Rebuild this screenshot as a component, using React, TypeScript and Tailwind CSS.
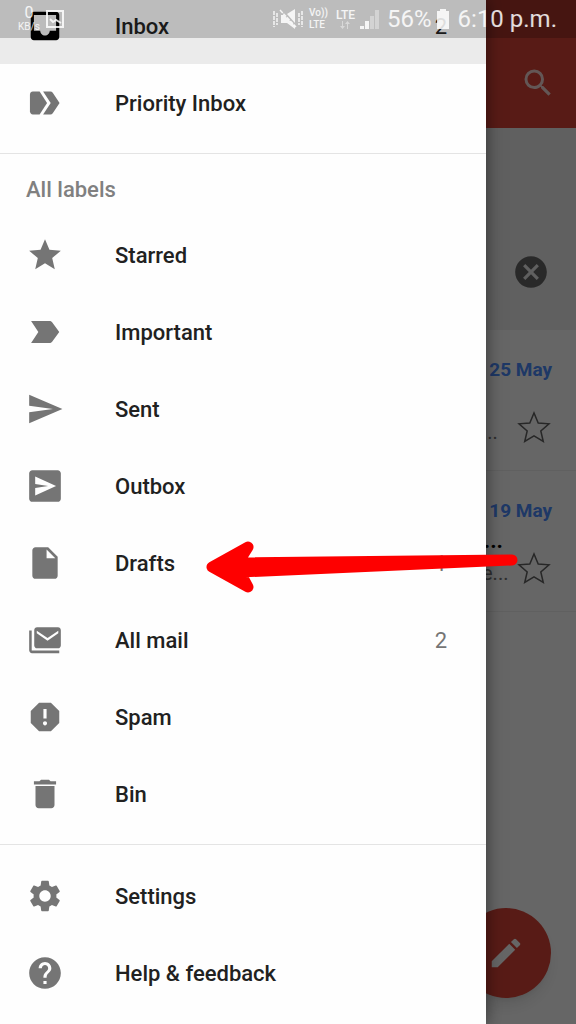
import type { ReactNode } from "react";
import {
  MdCancel,
  MdCreate,
  MdDelete,
  MdHelp,
  MdReport,
  MdSearch,
  MdSend,
  MdSettings,
  MdStar,
} from "react-icons/md";

function Glyph({ children }: { children: ReactNode }) {
  return (
    <svg viewBox="0 0 24 24" className="size-full" fill="currentColor" aria-hidden>
      {children}
    </svg>
  );
}

const InboxIcon = () => (
  <Glyph>
    <path d="M19 3H5c-1.1 0-2 .9-2 2v14c0 1.1.9 2 2 2h14c1.1 0 2-.9 2-2V5c0-1.1-.9-2-2-2zm0 12h-4c0 1.66-1.34 3-3 3s-3-1.34-3-3H5V5h14v10z" />
  </Glyph>
);

const PriorityIcon = () => (
  <Glyph>
    <path d="M4.3 4.8H8.6L13.3 12l-4.7 7.2H4.3c-1 0-1.8-.8-1.8-1.8V6.6c0-1 .8-1.8 1.8-1.8z" />
    <path d="M10.8 4.8h4.6c.6 0 1.1.3 1.5.8L21.2 12l-4.3 6.4c-.4.5-.9.8-1.5.8h-4.6L15.6 12z" />
  </Glyph>
);

const ImportantIcon = () => (
  <Glyph>
    <path d="M3.2 19h11.6c.7 0 1.3-.3 1.7-.8L21 12l-4.5-6.2c-.4-.5-1-.8-1.7-.8H3.2L7.8 12z" />
  </Glyph>
);

const OutboxIcon = () => (
  <Glyph>
    <path
      fillRule="evenodd"
      d="M4 2h16c1.1 0 2 .9 2 2v16c0 1.1-.9 2-2 2H4c-1.1 0-2-.9-2-2V4c0-1.1.9-2 2-2zM5.8 6v4.7L14 12l-8.2 1.3V18L19 12z"
    />
  </Glyph>
);

const DraftsIcon = () => (
  <Glyph>
    <path d="M6 2c-1.1 0-2 .9-2 2v16c0 1.1.9 2 2 2h12c1.1 0 2-.9 2-2V8l-6-6H6zm7 7V3.5L18.5 9H13z" />
  </Glyph>
);

const AllMailIcon = () => (
  <Glyph>
    <path d="M3.6 6H2v12.5c0 1 .8 1.8 1.8 1.8H21v-1.6H3.6z" />
    <path
      fillRule="evenodd"
      d="M7 4h13.2c1 0 1.8.8 1.8 1.8v9.6c0 1-.8 1.8-1.8 1.8H7c-1 0-1.8-.8-1.8-1.8V5.8C5.2 4.8 6 4 7 4zm-.2 3.8 6.8 4.6 6.8-4.6V6.2l-6.8 4.6-6.8-4.6z"
    />
  </Glyph>
);

const StarOutline = () => (
  <svg viewBox="0 0 24 24" className="size-full" fill="none" stroke="currentColor" aria-hidden>
    <path d="M12 17.27 18.18 21l-1.64-7.03L22 9.24l-7.19-.61L12 2 9.19 8.63 2 9.24l5.46 4.73L5.82 21z" />
  </svg>
);

type Item = { label: string; icon: ReactNode; count?: number; arrow?: boolean };

const INBOXES: Item[] = [{ label: "Priority Inbox", icon: <PriorityIcon /> }];

const LABELS: Item[] = [
  { label: "Starred", icon: <MdStar className="size-full" /> },
  { label: "Important", icon: <ImportantIcon /> },
  { label: "Sent", icon: <MdSend className="size-full" /> },
  { label: "Outbox", icon: <OutboxIcon /> },
  { label: "Drafts", icon: <DraftsIcon />, count: 1, arrow: true },
  { label: "All mail", icon: <AllMailIcon />, count: 2 },
  { label: "Spam", icon: <MdReport className="size-full" /> },
  { label: "Bin", icon: <MdDelete className="size-full" /> },
];

const FOOTER: Item[] = [
  { label: "Settings", icon: <MdSettings className="size-full" /> },
  { label: "Help & feedback", icon: <MdHelp className="size-full" /> },
];

function Arrow() {
  return (
    <svg
      viewBox="0 0 325 60"
      className="pointer-events-none absolute top-3 left-[200px] z-10 h-[60px] w-[325px]"
      aria-hidden
    >
      <path
        d="M12 31 48 11 38 27 312 24 40 36 48 51z"
        fill="#fe0000"
        stroke="#fe0000"
        strokeWidth="11"
        strokeLinejoin="round"
      />
    </svg>
  );
}

function Row({ item }: { item: Item }) {
  return (
    <li className="relative">
      <a href="#" className="flex h-[77px] items-center pr-[39px] pl-[26px]">
        <span className="mr-[51px] size-[38px] text-[#757575]">{item.icon}</span>
        <span className="flex-1 pt-0.5 font-medium text-[#212121]">{item.label}</span>
        {item.count && <span className="pt-0.5 text-[#757575]">{item.count}</span>}
      </a>
      {item.arrow && <Arrow />}
    </li>
  );
}

function Drawer() {
  return (
    <nav
      aria-label="Labels"
      className="absolute inset-y-0 right-[90px] left-0 bg-[#fefefe] text-[22px] leading-7 shadow-[0_0_16px_rgba(0,0,0,0.5)]"
    >
      {/* list is scrolled a little, so the first row runs under the status bar */}
      <div className="-mt-[13px]">
        <a
          href="#"
          className="flex h-[77px] items-center bg-[#ebebeb] pr-[39px] pl-[26px] text-[#212121]"
        >
          <span className="mr-[51px] size-[38px] text-black">
            <InboxIcon />
          </span>
          <span className="flex-1 pt-0.5 font-medium">Inbox</span>
          <span className="pt-0.5">2</span>
        </a>
        <ul className="border-b border-[#e4e4e4] pb-3">
          {INBOXES.map((i) => (
            <Row key={i.label} item={i} />
          ))}
        </ul>
        <h2 className="px-[26px] pt-[22px] pb-3 font-medium text-[#808080]">All labels</h2>
        <ul className="border-b border-[#e4e4e4] pb-3">
          {LABELS.map((i) => (
            <Row key={i.label} item={i} />
          ))}
        </ul>
        <ul className="pt-3">
          {FOOTER.map((i) => (
            <Row key={i.label} item={i} />
          ))}
        </ul>
      </div>
    </nav>
  );
}

function Mail({ date, subject, snippet }: { date: string; subject?: string; snippet: string }) {
  return (
    <li className="flex h-[141px] flex-col items-end border-b border-[#efefef] pt-[26px] pr-6">
      <span className="text-[19px] leading-7 font-bold text-[#4b8cff]">{date}</span>
      <span className="h-6 pr-[49px] text-[22px] leading-8 font-bold text-black">{subject}</span>
      <div className="flex items-end pt-0.5">
        <span className="mr-1.5 w-7 text-xl leading-7 text-[#757575]">{snippet}</span>
        <button type="button" aria-label="Star" className="size-9 text-[#616161]">
          <StarOutline />
        </button>
      </div>
    </li>
  );
}

function Mailbox() {
  return (
    <main className="min-h-screen bg-white">
      <header className="flex h-32 items-end justify-end bg-[#db4437] pr-5 pb-[27px]">
        <button type="button" aria-label="Search" className="size-9 text-[#ffffffcc]">
          <MdSearch className="size-full" />
        </button>
      </header>
      <section className="flex h-[202px] justify-end bg-[#f0f0f0] pt-[125px] pr-[26px]">
        <button type="button" aria-label="Dismiss" className="size-[38px] text-[#686868]">
          <MdCancel className="size-full" />
        </button>
      </section>
      <ul>
        <Mail date="25 May" snippet="..." />
        <Mail date="19 May" subject="..." snippet="e..." />
      </ul>
      <button
        type="button"
        aria-label="Compose"
        className="absolute right-[25px] bottom-[26px] flex size-[90px] items-center justify-center rounded-full bg-[#db4437] text-white shadow-lg"
      >
        <MdCreate className="size-[38px]" />
      </button>
    </main>
  );
}

function StatusBar() {
  return (
    <div className="absolute inset-x-0 top-0 z-20 flex h-[38px] items-center bg-black/20 pr-[19px] pl-[15px] text-white/85">
      <div className="w-7 text-center">
        <p className="text-base leading-4">0</p>
        <p className="text-[10px] leading-3">KB/s</p>
      </div>
      <svg
        viewBox="0 0 20 20"
        className="ml-0.5 size-5"
        fill="none"
        stroke="currentColor"
        strokeWidth="2"
        aria-hidden
      >
        <path d="M2 2h16v16H2zM5 10l3 3 3-2 5 3" />
      </svg>
      <div className="ml-auto flex items-center">
        <svg viewBox="0 0 30 22" className="h-[22px] w-[30px]" fill="currentColor" aria-hidden>
          <path d="M14 6l8-5v14zM8 7h3l11 11v3l-8-6H8z" />
          <path
            d="M7 2l16 17M4 5v12M1 3v16M26 5v12M29 3v16"
            fill="none"
            stroke="currentColor"
            strokeWidth="1.5"
            strokeDasharray="4 1"
          />
        </svg>
        <div className="ml-1.5 text-[10px] leading-3 font-medium">
          <p>Vo))</p>
          <p>LTE</p>
        </div>
        <div className="ml-2 flex flex-col items-center text-xs leading-3 font-medium">
          <span>LTE</span>
          <svg viewBox="0 0 10 8" className="h-2 w-2.5" fill="currentColor" opacity=".5" aria-hidden>
            <path d="M2.5 8 0 5h2V0h1v5h2zM7.5 0 10 3H8v5H7V3H5z" />
          </svg>
        </div>
        <svg viewBox="0 0 20 20" className="ml-1 size-5" fill="currentColor" aria-hidden>
          <path d="M1 17h4v3H1zM6 12h4v8H6z" />
          <path d="M11 7h4v13h-4zM16 1h4v19h-4z" opacity=".4" />
        </svg>
        <span className="ml-2 text-2xl">56%</span>
        <svg viewBox="0 0 14 20" className="ml-1 h-5 w-3.5" fill="currentColor" aria-hidden>
          <path d="M4 0h6v2h3v18H1V2h3z" />
        </svg>
        <time className="ml-2 text-2xl">6:10 p.m.</time>
      </div>
    </div>
  );
}

export default function App() {
  return (
    <div className="relative min-h-screen overflow-hidden font-[Roboto,sans-serif]">
      <Mailbox />
      <div className="absolute inset-0 bg-black/60" />
      <Drawer />
      <StatusBar />
    </div>
  );
}
